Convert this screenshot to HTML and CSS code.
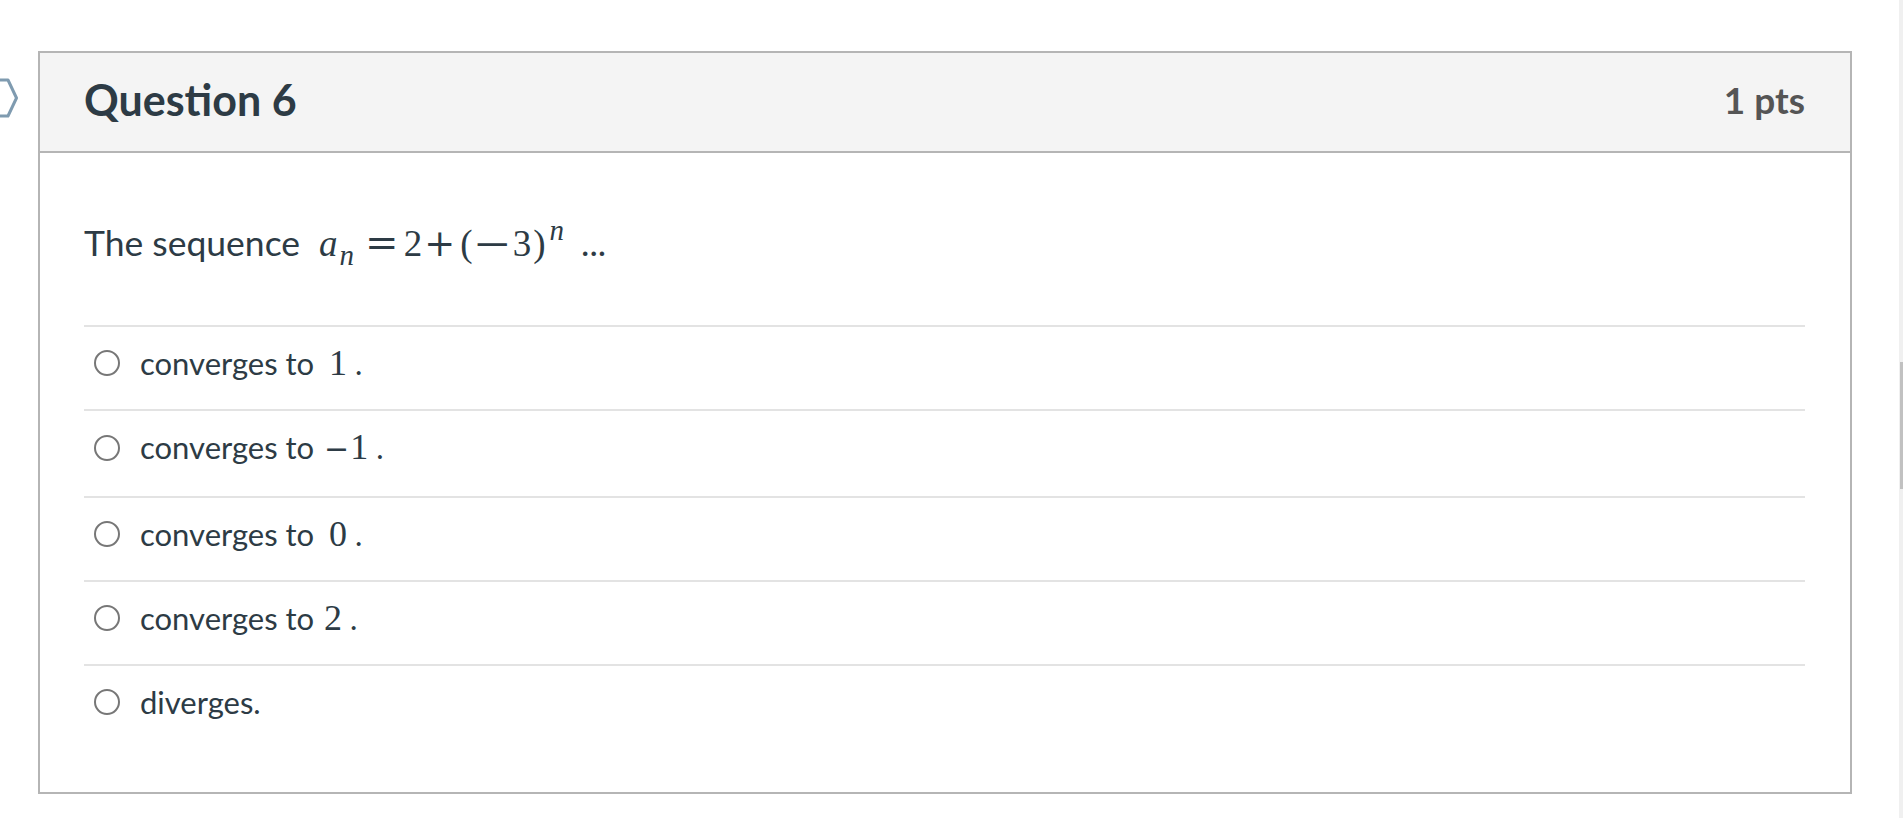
FILE: index.html
```html
<!DOCTYPE html>
<html>
<head>
<meta charset="utf-8">
<link rel="stylesheet" href="styles.css">
</head>
<body>
<div class="page">
  <svg class="flag" width="20" height="42" viewBox="0 0 20 42"><path d="M-12 2 H8 L16.5 20 L8 38 H-12" fill="none" stroke="#7f9bb0" stroke-width="3" stroke-linejoin="round"/></svg>
  <div class="card">
    <div class="header">
      <h2 class="title">Question 6</h2>
      <div class="pts">1 pts</div>
    </div>
    <div class="content">
      <div class="qtext">The sequence <span class="math"><i>a</i><sub><i>n</i></sub><span class="op">=</span>2<span class="op2">+</span><span class="par">(</span><span class="minus">−</span>3<span class="par">)</span><sup><i>n</i></sup></span> ...</div>
      <div class="answers">
        <label class="answer"><span class="radio"></span><span class="label">converges to <span class="num">1</span> .</span></label>
        <label class="answer"><span class="radio"></span><span class="label">converges to <span class="num neg"><span class="nminus">−</span>1</span> .</span></label>
        <label class="answer"><span class="radio"></span><span class="label">converges to <span class="num">0</span> .</span></label>
        <label class="answer"><span class="radio"></span><span class="label">converges to <span class="num tight">2</span> .</span></label>
        <label class="answer"><span class="radio"></span><span class="label">diverges.</span></label>
      </div>
    </div>
  </div>
</div>
<div class="scrollbar"><div class="thumb"></div></div>
</body>
</html>
```
FILE: styles.css
```css
html, body {
  margin: 0;
  padding: 0;
  background: #ffffff;
  font-family: Lato, "Noto Sans", sans-serif;
  color: #2d3b45;
}
.page {
  position: relative;
  padding: 51px 0 0 38px;
}
.flag {
  position: absolute;
  left: 0;
  top: 78px;
}
.card {
  width: 1814px;
  box-sizing: border-box;
  border: 2px solid #b5b5b5;
}
.header {
  background: #f4f4f4;
  border-bottom: 2px solid #b5b5b5;
  height: 100px;
  box-sizing: border-box;
  display: flex;
  align-items: center;
  justify-content: space-between;
  padding: 0 45px 5px 44px;
}
.title {
  margin: 0;
  font-size: 43px;
  font-weight: 700;
  color: #2d3b45;
}
.pts {
  font-size: 37px;
  font-weight: 700;
  color: #555555;
}
.content {
  padding: 62px 45px 44px 44px;
}
.qtext {
  font-size: 35.5px;
  line-height: 54px;
  margin-bottom: 54px;
  color: #2d3b45;
}
.math {
  font-family: "Liberation Serif", "DejaVu Serif", serif;
  font-size: 37px;
  margin-left: 10px;
  margin-right: 8px;
}
.math sub {
  font-size: 29px;
  vertical-align: -9px;
  line-height: 0;
  margin-left: 2px;
}
.math sup {
  font-size: 29px;
  vertical-align: 16px;
  line-height: 0;
  margin-left: 2px;
}
.op, .op2, .minus, .nminus {
  font-family: "DejaVu Serif", serif;
}
.op { font-size: 40px; margin: 0 5px 0 11px; }
.op2 { font-size: 37px; margin: 0 3px 0 2px; }
.par { margin: 0 2px; }
.minus {
  display: inline-block;
  font-size: 36px;
  transform: scaleX(1.3);
  margin: 0 5px 0 3px;
}
.nminus { font-size: 30px; margin-right: 1px; }
.answers {
  display: flex;
  flex-direction: column;
}
.answer {
  display: flex;
  align-items: center;
  gap: 20px;
  border-top: 2px solid #e3e3e3;
  padding: 12px 0 22.3px 10px;
  line-height: 48px;
  font-size: 31px;
}
.radio {
  width: 26px;
  height: 26px;
  box-sizing: border-box;
  border: 2px solid #777777;
  border-radius: 50%;
  flex: none;
}
.num {
  font-family: "Liberation Serif", "DejaVu Serif", serif;
  font-size: 36px;
  margin-left: 7px;
}
.num.neg, .num.tight { margin-left: 2px; }
.scrollbar {
  position: fixed;
  top: 0;
  right: 0;
  width: 4px;
  height: 100%;
  background: #f0f0f0;
}
.thumb {
  position: absolute;
  top: 362px;
  right: 0;
  width: 3px;
  height: 127px;
  background: #c1c1c1;
}
```
